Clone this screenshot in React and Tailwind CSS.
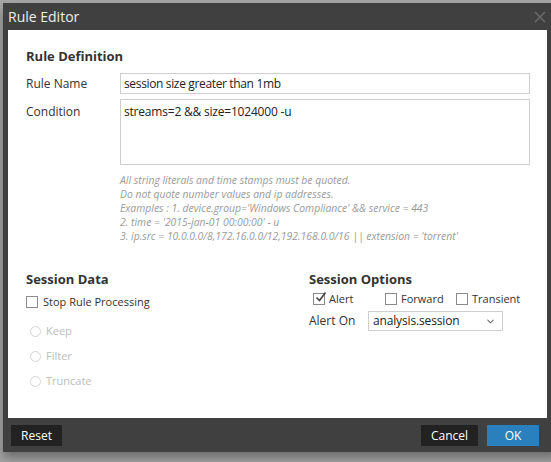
import React from 'react';

const font = { fontFamily: '"Open Sans", "Noto Sans", sans-serif' };

function Check({ checked }) {
  return (
    <span className="relative inline-block w-[12px] h-[12px] border border-[#8a8a8a] bg-white shrink-0">
      {checked && (
        <svg viewBox="0 0 12 12" className="absolute left-[1px] top-[-3px] w-[12px] h-[12px]">
          <path d="M1.5 6.5 L4.5 9.5 L10.5 1.5" fill="none" stroke="#444" strokeWidth="1.6" />
        </svg>
      )}
    </span>
  );
}

function Radio({ label }) {
  return (
    <div className="flex items-center gap-[5px] h-[25px] pl-[4px]">
      <span className="w-[11px] h-[11px] rounded-full border border-[#d6d6d6] bg-white" />
      <span className="text-[11px] text-[#bdbdbd]">{label}</span>
    </div>
  );
}

export default function App() {
  return (
    <div className="w-[551px] h-[462px] overflow-hidden bg-[#a6a6a6] pt-[3px] pl-[3px]" style={font}>
      <div className="w-[556px] h-[449px] bg-[#404040] shadow-[0_6px_10px_rgba(0,0,0,0.35)] flex flex-col">
        {/* title bar */}
        <div className="h-[27px] flex items-center justify-between pl-[5px] pr-[13px]">
          <span className="text-[14px] text-[#eeeeee] leading-none">Rule Editor</span>
          <svg viewBox="0 0 12 12" className="w-[12px] h-[12px]">
            <path d="M1 1 L11 11 M11 1 L1 11" stroke="#6a6a6a" strokeWidth="1.6" />
          </svg>
        </div>

        {/* body */}
        <div className="ml-[5px] w-[539px] h-[388px] bg-white pt-[17px] pl-[18px] pr-[17px] text-[#333]">
          <div className="text-[13px] font-bold leading-[18px]">Rule Definition</div>

          <div className="flex items-center mt-[8px]">
            <span className="w-[94px] text-[12px]">Rule Name</span>
            <div className="flex-1 h-[21px] border border-[#cfcfcf] flex items-center px-[3px] text-[12px] tracking-[-0.35px] text-[#222]">
              session size greater than 1mb
            </div>
          </div>

          <div className="flex mt-[5px]">
            <span className="w-[94px] text-[12px] pt-[4px]">Condition</span>
            <div className="flex-1 h-[66px] border border-[#cfcfcf] px-[3px] pt-[3px] text-[12px] tracking-[-0.2px] text-[#222]">
              streams=2 &amp;&amp; size=1024000 -u
            </div>
          </div>

          <div className="ml-[94px] mt-[8px] text-[10.4px] italic text-[#9a9a9a] leading-[14px]">
            <div>All string literals and time stamps must be quoted.</div>
            <div>Do not quote number values and ip addresses.</div>
            <div>Examples : 1. device.group='Windows Compliance' &amp;&amp; service = 443</div>
            <div>2. time = '2015-jan-01 00:00:00' - u</div>
            <div>3. ip.src = 10.0.0.0/8,172.16.0.0/12,192.168.0.0/16 || extension = 'torrent'</div>
          </div>

          <div className="flex mt-[27px]">
            {/* session data */}
            <div className="w-[283px]">
              <div className="text-[13px] font-bold leading-[18px]">Session Data</div>
              <div className="flex items-center gap-[5px] mt-[6px] h-[16px]">
                <Check />
                <span className="text-[11px]">Stop Rule Processing</span>
              </div>
              <div className="mt-[9px]">
                <Radio label="Keep" />
                <Radio label="Filter" />
                <Radio label="Truncate" />
              </div>
            </div>

            {/* session options */}
            <div className="flex-1">
              <div className="text-[13px] font-bold leading-[18px]">Session Options</div>
              <div className="flex items-center h-[16px] mt-[3px] pl-[4px] text-[11px]">
                <div className="flex items-center gap-[4px] w-[72px]">
                  <Check checked />
                  <span>Alert</span>
                </div>
                <div className="flex items-center gap-[4px] w-[71px]">
                  <Check />
                  <span>Forward</span>
                </div>
                <div className="flex items-center gap-[4px]">
                  <Check />
                  <span>Transient</span>
                </div>
              </div>
              <div className="flex items-center mt-[4px]">
                <span className="w-[59px] text-[12px]">Alert On</span>
                <div className="w-[135px] h-[20px] border border-[#cfcfcf] flex items-center justify-between pl-[4px] pr-[8px] text-[12px] tracking-[-0.15px] text-[#222]">
                  <span>analysis.session</span>
                  <svg viewBox="0 0 8 5" className="w-[7px] h-[5px]">
                    <path d="M0.5 0.5 L4 4 L7.5 0.5" fill="none" stroke="#555" strokeWidth="1.2" />
                  </svg>
                </div>
              </div>
            </div>
          </div>
        </div>

        {/* footer */}
        <div className="flex items-center justify-between pl-[8px] pr-[20px] mt-[7px]">
          <button className="h-[21px] w-[51px] bg-[#222222] text-white text-[12px]">Reset</button>
          <div className="flex gap-[9px]">
            <button className="h-[21px] w-[57px] bg-[#222222] text-white text-[12px]">Cancel</button>
            <button className="h-[21px] w-[52px] bg-[#2a7fbd] text-white text-[12px]">OK</button>
          </div>
        </div>
      </div>
    </div>
  );
}
